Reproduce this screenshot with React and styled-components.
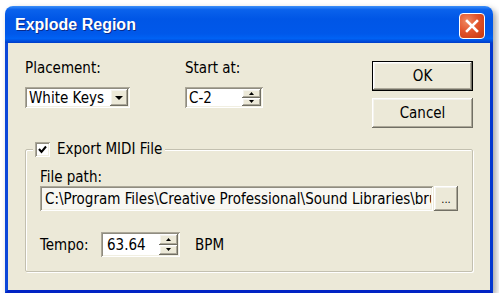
import React from 'react'
import styled, { createGlobalStyle } from 'styled-components'

const GlobalStyle = createGlobalStyle`
  body {
    margin: 0;
    background: #ffffff;
  }
`

const raised = `
  background: #ece9d8;
  box-shadow: inset -1px -1px #716f64, inset 1px 1px #ffffff,
    inset -2px -2px #aca899, inset 2px 2px #f4f3ee;
`

const sunken = `
  box-shadow: inset 1px 1px #aca899, inset -1px -1px #ffffff,
    inset 2px 2px #8f8c80, inset -2px -2px #f1efe2;
`

const Window = styled.div`
  margin: 6px 0 0 5px;
  width: 488px;
  height: 287px;
  display: flex;
  flex-direction: column;
  border-radius: 8px 8px 0 0;
  box-shadow: 3px 3px 6px rgba(0, 0, 0, 0.35);
  font-family: 'DejaVu Sans Condensed', 'DejaVu Sans', sans-serif;
  font-size: 15px;
  color: #000;
`

const TitleBar = styled.div`
  height: 37px;
  flex: none;
  display: flex;
  align-items: center;
  justify-content: space-between;
  padding: 0 8px 0 10px;
  border-radius: 8px 8px 0 0;
  background: linear-gradient(
    to bottom,
    #3d8ff8 0%,
    #0a62ec 10%,
    #0056e6 35%,
    #0058ea 75%,
    #0062f4 88%,
    #0049d8 96%,
    #003cc6 100%
  );
`

const Title = styled.span`
  font-family: 'Liberation Sans', Arial, sans-serif;
  font-weight: bold;
  font-size: 16px;
  color: #ffffff;
  text-shadow: 1px 1px 0 #0a2b8a;
  margin-top: 1px;
`

const CloseButton = styled.div`
  width: 26px;
  height: 26px;
  margin-top: 3px;
  box-sizing: border-box;
  border: 1px solid #ffffff;
  border-radius: 4px;
  background: radial-gradient(circle at 30% 30%, #f08b63 0%, #e2542c 45%, #c6360f 100%);
  display: flex;
  align-items: center;
  justify-content: center;
`

const Body = styled.div`
  flex: 1;
  background: #ece9d8;
  border-left: 3px solid #0c47d8;
  border-right: 3px solid #0237d0;
  border-bottom: 3px solid #0123c4;
  box-shadow: 0 1px 0 #00138c;
  padding: 16px 17px 0 17px;
  display: flex;
  flex-direction: column;
`

const TopRow = styled.div`
  display: flex;
  align-items: flex-start;
`

const Field = styled.div`
  display: flex;
  flex-direction: column;
  margin-right: ${p => p.$gap || 0}px;
`

const Label = styled.div`
  line-height: 18px;
  height: 18px;
  margin-bottom: ${p => p.$space || 0}px;
  white-space: nowrap;
`

const Combo = styled.div`
  width: ${p => p.$w}px;
  height: ${p => p.$h}px;
  box-sizing: border-box;
  background: ${p => p.$bg || '#ffffff'};
  ${sunken}
  display: flex;
  align-items: center;
  padding: 2px 2px 2px ${p => p.$pl || 4}px;
`

const FieldText = styled.span`
  flex: 1;
  min-width: 0;
  white-space: nowrap;
  overflow: hidden;
  line-height: 18px;
`

const ArrowButton = styled.div`
  width: 18px;
  height: 100%;
  box-sizing: border-box;
  ${raised}
  display: flex;
  align-items: center;
  justify-content: center;
`

const SpinStack = styled.div`
  width: 19px;
  height: 100%;
  display: flex;
  flex-direction: column;
`

const SpinHalf = styled.div`
  flex: 1;
  ${raised}
  display: flex;
  align-items: center;
  justify-content: center;
`

const Spacer = styled.div`
  flex: 1;
`

const Buttons = styled.div`
  display: flex;
  flex-direction: column;
  gap: 7px;
  margin-top: 2px;
`

const PushButton = styled.div`
  width: 101px;
  height: 30px;
  box-sizing: border-box;
  ${raised}
  border: ${p => (p.$default ? '1px solid #000' : 'none')};
  display: flex;
  align-items: center;
  justify-content: center;
`

const Group = styled.fieldset`
  margin: 12px 0 0 0;
  padding: 10px 14px 14px 14px;
  width: 448px;
  box-sizing: border-box;
  border: 1px solid #c3c0b0;
  border-radius: 2px;
  box-shadow: 1px 1px 0 #ffffff, inset 1px 1px 0 #ffffff;
  min-width: 0;
`

const Legend = styled.legend`
  margin-left: -7px;
  padding: 0 3px 0 2px;
  display: flex;
  align-items: center;
  gap: 7px;
  height: 18px;
  background: #ece9d8;
`

const CheckBox = styled.div`
  width: 15px;
  height: 15px;
  box-sizing: border-box;
  background: #ffffff;
  ${sunken}
  display: flex;
  align-items: center;
  justify-content: center;
`

const PathRow = styled.div`
  display: flex;
  gap: 1px;
  margin-bottom: 21px;
`

const BrowseButton = styled.div`
  width: 24px;
  height: 25px;
  box-sizing: border-box;
  ${raised}
  display: flex;
  align-items: flex-end;
  justify-content: center;
  padding-bottom: 6px;
  font-size: 11px;
  line-height: 11px;
`

const TempoRow = styled.div`
  display: flex;
  align-items: center;
`

const TempoLabel = styled.span`
  width: 61px;
`

const Unit = styled.span`
  margin-left: 15px;
`

const DownTriangle = ({ w = 8, h = 4 }) => (
  <svg width={w} height={h} viewBox={`0 0 ${w} ${h}`}>
    <polygon points={`0,0 ${w},0 ${w / 2},${h}`} fill="#000" />
  </svg>
)

const UpTriangle = ({ w = 5, h = 3 }) => (
  <svg width={w} height={h} viewBox={`0 0 ${w} ${h}`}>
    <polygon points={`0,${h} ${w},${h} ${w / 2},0`} fill="#000" />
  </svg>
)

const Spinner = () => (
  <SpinStack>
    <SpinHalf>
      <UpTriangle />
    </SpinHalf>
    <SpinHalf>
      <DownTriangle w={5} h={3} />
    </SpinHalf>
  </SpinStack>
)

const App = () => {
  return (
    <>
      <GlobalStyle />
      <Window>
        <TitleBar>
          <Title>Explode Region</Title>
          <CloseButton>
            <svg width="14" height="14" viewBox="0 0 14 14">
              <path d="M2 2 L12 12 M12 2 L2 12" stroke="#fff" strokeWidth="2.6" strokeLinecap="square" />
            </svg>
          </CloseButton>
        </TitleBar>
        <Body>
          <TopRow>
            <Field $gap={55}>
              <Label $space={10}>Placement:</Label>
              <Combo $w={105} $h={21}>
                <FieldText>White Keys</FieldText>
                <ArrowButton>
                  <DownTriangle />
                </ArrowButton>
              </Combo>
            </Field>
            <Field>
              <Label $space={10}>Start at:</Label>
              <Combo $w={78} $h={21}>
                <FieldText>C-2</FieldText>
                <Spinner />
              </Combo>
            </Field>
            <Spacer />
            <Buttons>
              <PushButton $default>OK</PushButton>
              <PushButton>Cancel</PushButton>
            </Buttons>
          </TopRow>
          <Group>
            <Legend>
              <CheckBox>
                <svg width="9" height="9" viewBox="0 0 9 9">
                  <path d="M1 4 L3.5 7 L8 1.5" stroke="#000" strokeWidth="2" fill="none" />
                </svg>
              </CheckBox>
              Export MIDI File
            </Legend>
            <Label>File path:</Label>
            <PathRow>
              <Combo $w={393} $h={25} $bg="#f8f7f2" $pl={5}>
                <FieldText>C:\Program Files\Creative Professional\Sound Libraries\bru</FieldText>
              </Combo>
              <BrowseButton>...</BrowseButton>
            </PathRow>
            <TempoRow>
              <TempoLabel>Tempo:</TempoLabel>
              <Combo $w={79} $h={25} $pl={6}>
                <FieldText>63.64</FieldText>
                <Spinner />
              </Combo>
              <Unit>BPM</Unit>
            </TempoRow>
          </Group>
        </Body>
      </Window>
    </>
  )
}

export default App
